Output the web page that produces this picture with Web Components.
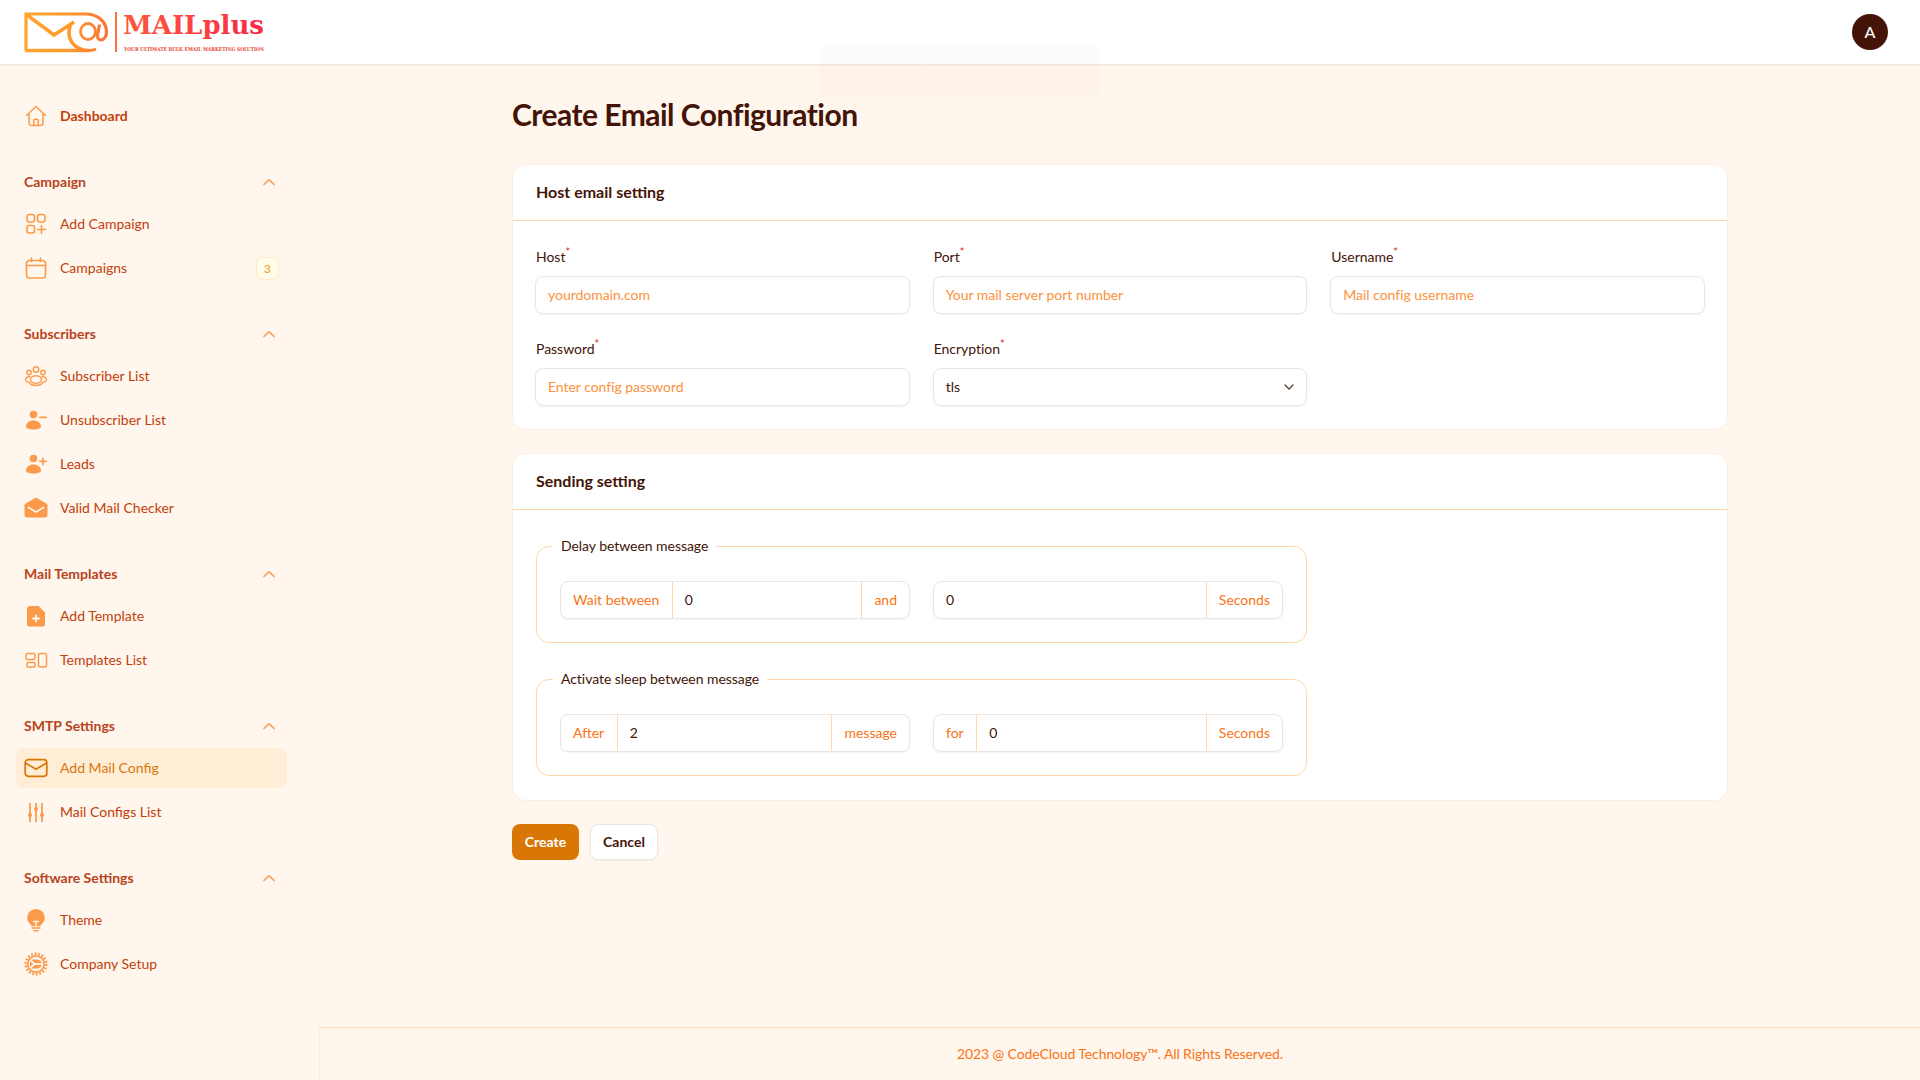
<!DOCTYPE html>
<html lang="en"><head><meta charset="utf-8"><title>Create Email Configuration</title>
<style>
html,body{margin:0;padding:0;height:1080px;overflow:hidden}
body{font-family:Lato,"Liberation Sans",sans-serif;font-size:14px;background:#fff6ed;color:#431407}
</style></head><body>
<template id="t-app"><style>
:host{display:grid;grid-template-columns:320px 1600px;grid-template-rows:65px 1015px;height:1080px;position:relative}
::slotted(app-header){grid-column:1/3}
</style><slot></slot></template>

<mail-app>
  <app-header></app-header>
  <side-nav>
    <nav-item icon="home" top>Dashboard</nav-item>
    <nav-group label="Campaign">
      <nav-item icon="addgrid">Add Campaign</nav-item>
      <nav-item icon="calendar" badge="3">Campaigns</nav-item>
    </nav-group>
    <nav-group label="Subscribers">
      <nav-item icon="people">Subscriber List</nav-item>
      <nav-item icon="userminus">Unsubscriber List</nav-item>
      <nav-item icon="userplus">Leads</nav-item>
      <nav-item icon="mailopen">Valid Mail Checker</nav-item>
    </nav-group>
    <nav-group label="Mail Templates">
      <nav-item icon="docplus">Add Template</nav-item>
      <nav-item icon="layout">Templates List</nav-item>
    </nav-group>
    <nav-group label="SMTP Settings">
      <nav-item icon="mail" active>Add Mail Config</nav-item>
      <nav-item icon="sliders">Mail Configs List</nav-item>
    </nav-group>
    <nav-group label="Software Settings">
      <nav-item icon="bulb">Theme</nav-item>
      <nav-item icon="gear">Company Setup</nav-item>
    </nav-group>
  </side-nav>
  <main-area>
    <h-title>Create Email Configuration</h-title>
    <form-card heading="Host email setting">
      <form-grid>
        <text-field label="Host" placeholder="yourdomain.com"></text-field>
        <text-field label="Port" placeholder="Your mail server port number"></text-field>
        <text-field label="Username" placeholder="Mail config username"></text-field>
        <text-field label="Password" placeholder="Enter config password"></text-field>
        <text-field label="Encryption" value="tls" select></text-field>
      </form-grid>
    </form-card>
    <form-card heading="Sending setting" second>
      <field-set legend="Delay between message">
        <input-group before="Wait between" value="0" after="and"></input-group>
        <input-group value="0" after="Seconds"></input-group>
      </field-set>
      <field-set legend="Activate sleep between message" second>
        <input-group before="After" value="2" after="message"></input-group>
        <input-group before="for" value="0" after="Seconds"></input-group>
      </field-set>
    </form-card>
    <form-actions></form-actions>
    <app-footer>2023 @ CodeCloud Technology™. All Rights Reserved.</app-footer>
  </main-area>
  <fs-toast></fs-toast>
</mail-app>

<script>
const OR='#fb9a4b';
const ICONS={
home:`<g fill="none" stroke="currentColor" stroke-width="1.5" stroke-linecap="round" stroke-linejoin="round"><path d="M2.5 11.5 12 2.5l9.5 9M5 9.5V19a2.5 2.5 0 0 0 2.5 2.5h9A2.5 2.5 0 0 0 19 19V9.5"/><path d="M9.8 21.5v-5a1.2 1.2 0 0 1 1.2-1.2h2a1.2 1.2 0 0 1 1.2 1.2v5"/></g>`,
addgrid:`<g fill="none" stroke="currentColor" stroke-width="1.6" stroke-linecap="round"><rect x="3" y="2.5" width="7.5" height="7.5" rx="2.2"/><rect x="13.5" y="2.5" width="7.5" height="7.5" rx="2.2"/><rect x="3" y="13.5" width="7.5" height="7.5" rx="2.2"/><path d="M17.5 13.5v8M13.5 17.5h8"/></g>`,
calendar:`<g fill="none" stroke="currentColor" stroke-width="1.6" stroke-linecap="round"><rect x="2.5" y="4.5" width="19" height="17.5" rx="3"/><path d="M2.5 9.5h19M7.5 2v3.5M16.5 2v3.5"/></g>`,
people:`<g fill="none" stroke="currentColor" stroke-width="1.4"><circle cx="12" cy="5.5" r="2.8"/><circle cx="5" cy="8.5" r="2.2"/><circle cx="19" cy="8.5" r="2.2"/><ellipse cx="12" cy="15.5" rx="5.5" ry="3.8"/><path d="M6.5 12.5C3.5 12.5 1.5 14 1.5 15.5S3.5 18.5 6.3 18.5M17.5 12.5c3 0 5 1.5 5 3s-2 3-4.8 3M5 18.5c1.5 2 4 3 7 3s5.5-1 7-3"/></g>`,
userminus:`<g fill="currentColor"><circle cx="9.5" cy="6.5" r="3.8"/><path d="M2 18.5c0-3.4 3.4-6 7.5-6s7.5 2.6 7.5 6c0 2-3.4 3-7.5 3s-7.5-1-7.5-3z"/><rect x="15" y="8.6" width="8" height="1.7" rx=".8"/></g>`,
userplus:`<g fill="currentColor"><circle cx="9.5" cy="6.5" r="3.8"/><path d="M2 18.5c0-3.4 3.4-6 7.5-6s7.5 2.6 7.5 6c0 2-3.4 3-7.5 3s-7.5-1-7.5-3z"/><rect x="15" y="8.6" width="8" height="1.7" rx=".8"/><rect x="18.15" y="5.5" width="1.7" height="8" rx=".8"/></g>`,
mailopen:`<path fill="currentColor" d="M12 1.5 22.7 7.7c.5.3.8.8.8 1.3v10a2.5 2.5 0 0 1-2.5 2.5H3A2.5 2.5 0 0 1 .5 19V9c0-.5.3-1 .8-1.3z"/><path fill="none" stroke="#fff6ed" stroke-width="1.7" stroke-linecap="round" stroke-linejoin="round" d="M4.5 11.5 12 16l7.5-4.5"/>`,
docplus:`<path fill="currentColor" d="M6 2h8.5L21 8.5V20a2.5 2.5 0 0 1-2.5 2.5h-13A2.5 2.5 0 0 1 3 20V5a3 3 0 0 1 3-3z"/><path fill="none" stroke="#fff6ed" stroke-width="1.8" stroke-linecap="round" d="M12 11.5v6M9 14.5h6"/>`,
layout:`<g fill="none" stroke="currentColor" stroke-width="1.5"><rect x="2" y="5.5" width="9" height="6" rx="1.6"/><rect x="3" y="14.5" width="8" height="4.5" rx="1.5"/><rect x="14.5" y="5.5" width="8" height="13.5" rx="2"/></g>`,
mail:`<g fill="none" stroke="currentColor" stroke-width="1.7" stroke-linecap="round" stroke-linejoin="round"><rect x="1.2" y="3.7" width="21.6" height="16.6" rx="3"/><path d="M1.5 7 12 13.2 22.5 7"/></g>`,
sliders:`<g fill="none" stroke="currentColor" stroke-width="1.7" stroke-linecap="round"><path d="M6 3.5V21.5M12 3.5V21.5M18 3.5V21.5"/></g><g fill="currentColor"><circle cx="6" cy="15" r="2"/><circle cx="12" cy="9" r="2"/><circle cx="18" cy="15" r="2"/></g>`,
bulb:`<path fill="currentColor" d="M12 1a8.8 8.8 0 0 1 8.8 8.8c0 3.2-1.7 5.3-3.6 6.9-.7.6-.9 1-.9 1.5H7.7c0-.5-.2-.9-.9-1.5C4.9 15.1 3.2 13 3.2 9.8A8.8 8.8 0 0 1 12 1z"/><path fill="none" stroke="#fff6ed" stroke-width="1.4" stroke-linecap="round" d="M9.5 13.5h5M12 13.5v4"/><path fill="none" stroke="currentColor" stroke-width="1.6" stroke-linecap="round" d="M8 20h8M10 22.8h4"/>`,
gear:`<circle cx="12" cy="12" r="8.2" fill="none" stroke="currentColor" stroke-width="1.7"/><circle cx="12" cy="12" r="10.3" fill="none" stroke="currentColor" stroke-width="2.4" stroke-dasharray="1.9 1.7"/><path fill="currentColor" d="M7 7.5h6a5 5 0 0 1 4.7 3.5H10.8zM7 16.5h6a5 5 0 0 0 4.7-3.5H10.8zM6 9l3.1 3L6 15z"/>`
};
function def(name,render){
  customElements.define(name,class extends HTMLElement{
    constructor(){super();this.attachShadow({mode:'open'});}
    connectedCallback(){this.shadowRoot.innerHTML=render(this);}
  });
}
customElements.define('mail-app',class extends HTMLElement{
  constructor(){super();this.attachShadow({mode:'open'}).appendChild(document.getElementById('t-app').content.cloneNode(true));}
});
def('app-header',()=>`<style>
:host{display:flex;align-items:center;justify-content:space-between;height:65px;box-sizing:border-box;background:#fff;border-bottom:1px solid #f3e6d8;padding:0 32px 0 24px;box-shadow:0 1px 1px rgba(120,70,20,.04)}
.av{width:36px;height:36px;border-radius:50%;background:#431407;color:#fff;display:flex;align-items:center;justify-content:center;font-size:16px;font-weight:500;margin-top:-1px}
svg{display:block;margin-top:-1px;overflow:visible}
</style>
<svg width="244" height="50" viewBox="0 -4 244 50" role="img" aria-label="MAILplus logo">
<defs><linearGradient id="g1" gradientUnits="userSpaceOnUse" x1="0" x2="84" y1="0" y2="0"><stop offset="0" stop-color="#ffa62f"/><stop offset=".55" stop-color="#ff9a2e"/><stop offset="1" stop-color="#fb7236"/></linearGradient>
<linearGradient id="g2" gradientUnits="userSpaceOnUse" x1="99" x2="240" y1="0" y2="0"><stop offset="0" stop-color="#fb5a3c"/><stop offset="1" stop-color="#f92a48"/></linearGradient></defs>
<g fill="none" stroke="url(#g1)" stroke-width="3.6">
<path d="M2 39.5V3h60c12 0 20.500 8 20.500 18 0 5-3 8-5.500 8s-4-2-3.500-5l2-10.500" stroke-width="3.2"/>
<path d="M1 39.5h64c-12 0-20-8-20-18 0-3 .6-5 1.500-7" />
<path d="M3 4l27 20 20-13"/>
<path d="M65 39.5c2.500 0 5-.4 7-1.300" stroke-width="3"/>
<ellipse cx="64" cy="20.500" rx="7.500" ry="8" stroke-width="2.800"/>
</g>
<rect x="91" y="1" width="2" height="40" fill="#fb7236"/>
<text x="99" y="23" font-family="'DejaVu Serif','Liberation Serif',serif" font-weight="700" font-size="26" fill="url(#g2)" textLength="141" lengthAdjust="spacingAndGlyphs">MAILplus</text>
<text x="100" y="40" font-family="'DejaVu Serif','Liberation Serif',serif" font-weight="700" font-size="5" fill="#e8452f" textLength="140" lengthAdjust="spacingAndGlyphs">YOUR ULTIMATE BULK EMAIL MARKETING SOLUTION</text>
</svg><div class="av">A</div>`);
def('side-nav',()=>`<style>
:host{display:flex;flex-direction:column;padding:31px 33px 0 16px;box-sizing:border-box;overflow:hidden;min-width:0}
</style><slot></slot>`);
def('nav-group',h=>`<style>
:host{display:block;margin-top:34px}
.h{display:flex;align-items:center;justify-content:space-between;height:24px;box-sizing:border-box;padding:0 8px 2px;margin-bottom:10px;font-weight:700;font-size:14px;color:#b8431c}
svg{width:16px;height:16px;color:${OR};margin-right:2px;position:relative;top:.5px}
.l{display:flex;flex-direction:column;gap:4px}
</style><div class="h"><span>${h.getAttribute('label')}</span><svg viewBox="0 0 16 16" fill="none" stroke="currentColor" stroke-width="1.5" stroke-linecap="round" stroke-linejoin="round"><path d="M3 10.5 8 5.8l5 4.7"/></svg></div><div class="l"><slot></slot></div>`);
def('nav-item',h=>{const a=h.hasAttribute('active'),b=h.getAttribute('badge');return `<style>
:host{display:flex;align-items:center;height:40px;border-radius:8px;padding:0 8px;box-sizing:border-box;font-size:14px;color:${a?'#d9770f':'#c2410c'};font-weight:${h.hasAttribute('top')?700:400};${a?'background:#ffedd5;':''}}
svg{width:24px;height:24px;flex:none;margin-right:12px;color:${a?'#d97706':OR}}
.t{flex:1;padding-bottom:2px}
.b{width:23px;height:23px;box-sizing:border-box;border:1px solid #feecc4;border-radius:5px;background:#fffbeb;color:#f59e0b;font-size:12px;font-weight:400;display:flex;align-items:center;justify-content:center}
</style><svg viewBox="0 0 24 24">${ICONS[h.getAttribute('icon')]}</svg><span class="t"><slot></slot></span>${b?`<span class="b">${b}</span>`:''}`});
def('main-area',()=>`<style>
:host{display:flex;flex-direction:column;align-items:center;padding-top:31px;box-sizing:border-box;height:1015px;position:relative;min-width:0}
.w{width:1216px;flex:1;display:flex;flex-direction:column}
</style><div class="w"><slot></slot></div>`);
def('h-title',()=>`<style>
:host{display:block;font-size:30px;line-height:36px;font-weight:700;color:#431407;margin-bottom:32px;letter-spacing:-.52px}
</style><slot></slot>`);
def('form-card',h=>`<style>
:host{display:block;background:#fff;border:1px solid #fbeee0;border-radius:13px;margin-bottom:23px;box-sizing:border-box}
.h{height:56px;border-bottom:1px solid #fed7aa;padding:0 23px 2px;display:flex;align-items:center;font-size:16px;font-weight:700;color:#431407;box-sizing:border-box}
.b{padding:${h.hasAttribute('second')?'24px 23px 24px':'23px 22px 23px'}}
</style><div class="h">${h.getAttribute('heading')}</div><div class="b"><slot></slot></div>`);
def('form-grid',()=>`<style>
:host{display:grid;grid-template-columns:repeat(3,minmax(0,1fr));column-gap:23px;row-gap:22px}
</style><slot></slot>`);
def('text-field',h=>{const p=h.getAttribute('placeholder'),v=h.getAttribute('value');return `<style>
:host{display:flex;flex-direction:column;gap:9px;min-width:0}
.l{height:20px;line-height:20px;font-size:14px;color:#431407;padding-left:1px;margin-top:3px;letter-spacing:-.03px}
sup{color:#dc2626;font-size:11px;line-height:0;vertical-align:6px}
.i{height:38px;box-sizing:border-box;border:1px solid #ebe5e5;border-radius:8px;background:#fff;box-shadow:0 1px 2px rgba(0,0,0,.05);padding:0 12px 2px;display:flex;align-items:center;justify-content:space-between;font-size:14px;letter-spacing:-.03px}
.p{color:#fb923c}.v{color:#431407}
svg{width:16px;height:16px;color:#5a3a2c;margin-right:-3px;position:relative;top:1px}
</style><div class="l">${h.getAttribute('label')}<sup>*</sup></div><div class="i"><span class="${p?'p':'v'}">${p||v}</span>${h.hasAttribute('select')?'<svg viewBox="0 0 16 16" fill="none" stroke="currentColor" stroke-width="1.3" stroke-linecap="round" stroke-linejoin="round"><path d="m4 6 4 4 4-4"/></svg>':''}</div>`});
def('field-set',h=>`<style>
:host{display:block;width:771px;position:relative;box-sizing:border-box;border:1px solid #fed7aa;border-radius:13px;height:97px;padding:34px 23px 0;margin-top:${h.hasAttribute('second')?'36px':'12px'}}
.lg{position:absolute;left:16px;top:-11px;background:#fff;padding:0 8px;line-height:20px;font-size:14px;color:#431407;letter-spacing:-.05px}
.r{display:grid;grid-template-columns:1fr 1fr;gap:23px}
</style><div class="lg">${h.getAttribute('legend')}</div><div class="r"><slot></slot></div>`);
def('input-group',h=>{const b=h.getAttribute('before'),a=h.getAttribute('after');return `<style>
:host{display:flex;height:38px;box-sizing:border-box;border:1px solid #ebe5e5;border-radius:8px;background:#fff;box-shadow:0 1px 2px rgba(0,0,0,.05);font-size:14px;overflow:hidden}
.a{display:flex;align-items:center;padding:0 12px 2px;color:#f97316;white-space:nowrap}
.b{border-right:1px solid #fed7aa;padding-right:12.5px}.c{border-left:1px solid #fed7aa}
.v{flex:1;padding:0 12px 2px;display:flex;align-items:center;color:#431407}
</style>${b?`<span class="a b">${b}</span>`:''}<span class="v">${h.getAttribute('value')}</span>${a?`<span class="a c">${a}</span>`:''}`});
def('form-actions',()=>`<style>
:host{display:flex;gap:11px}
.b{height:36px;width:67px;box-sizing:border-box;border-radius:8px;padding-bottom:2px;display:flex;align-items:center;justify-content:center;font-size:14px;font-weight:700}
.c{background:#d97706;color:#fff}
.x{background:#fff;color:#431407;border:1px solid #ece6e3;box-shadow:0 1px 2px rgba(0,0,0,.05);width:68px}
</style><div class="b c">Create</div><div class="b x">Cancel</div>`);
def('app-footer',()=>`<style>
:host{position:absolute;left:-1px;right:0;bottom:0;height:53px;box-sizing:border-box;border-top:1px solid #fbdcba;border-left:1px solid #f8eee3;padding-bottom:2px;display:flex;align-items:center;justify-content:center;color:#f97316;font-size:14px;letter-spacing:-.1px}
</style><slot></slot>`);
def('fs-toast',()=>`<style>
:host{position:absolute;left:820px;top:45px;width:279px;height:50px;background:rgba(60,30,10,.012);border-radius:2px;display:flex;align-items:center;justify-content:center;gap:8px;color:rgba(255,255,255,.12);font-size:16px;font-family:"Liberation Sans",sans-serif}
kbd{font:inherit;border:1px solid rgba(255,255,255,.2);border-radius:2px;padding:8px 10px}
</style>Press <kbd>F11</kbd> to exit full screen`);
</script>
</body></html>
